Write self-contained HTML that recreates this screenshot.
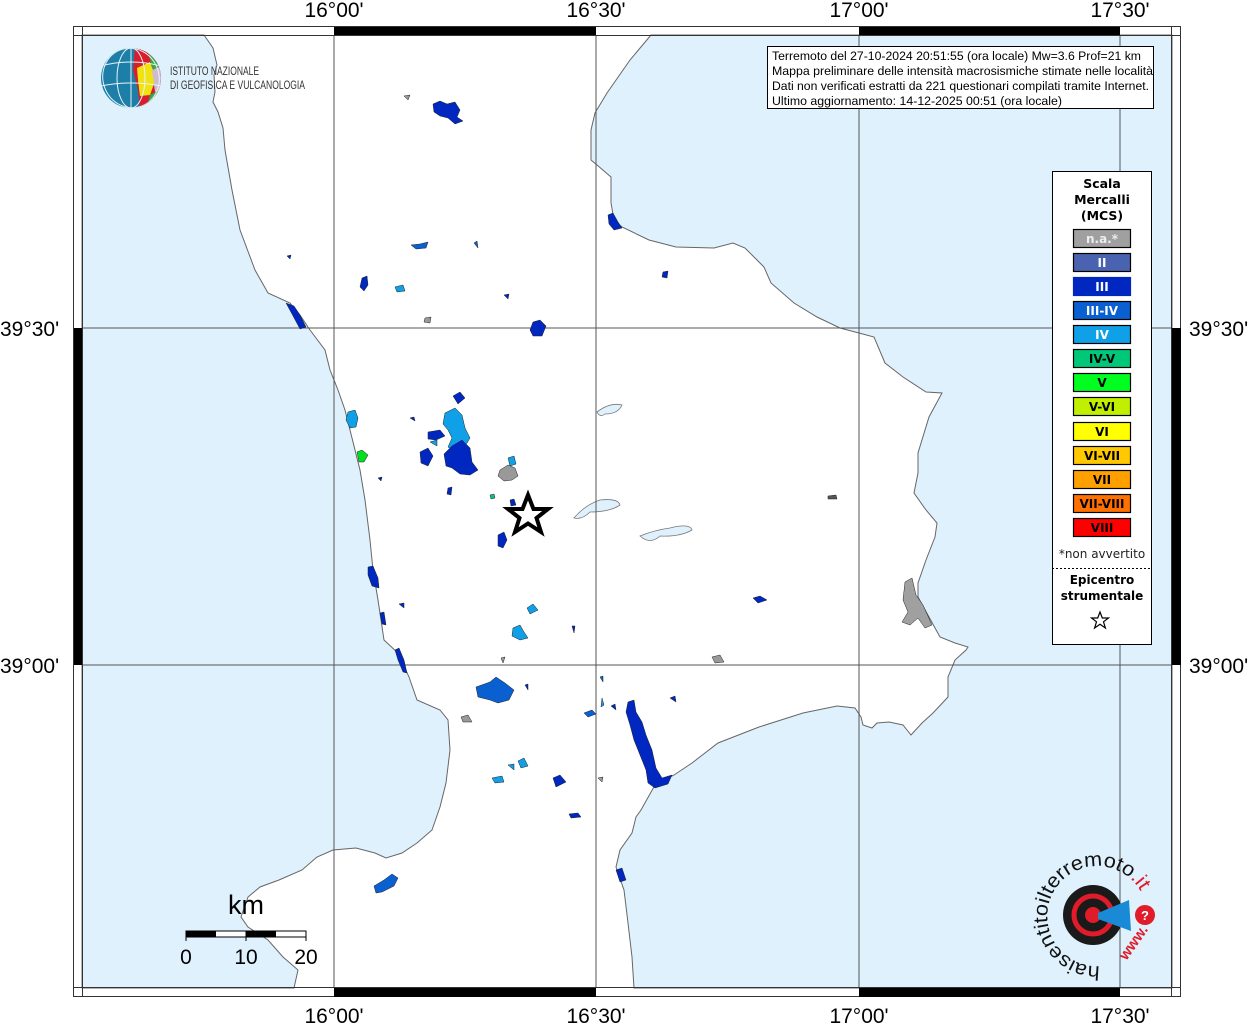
<!DOCTYPE html>
<html><head><meta charset="utf-8"><style>
html,body{margin:0;padding:0;background:#fff;width:1254px;height:1024px;overflow:hidden}
svg{display:block}
text{font-family:"Liberation Sans",sans-serif}
.dejav{font-family:"DejaVu Sans","Liberation Sans",sans-serif}
</style></head><body>
<svg width="1254" height="1024" viewBox="0 0 1254 1024" xmlns="http://www.w3.org/2000/svg">
<rect x="82" y="35" width="1090" height="953" fill="#fff"/>
<path d="M82,35 L204,35 L213,48 L217,65 L214,75 L215,92 L213,102 L218,112 L223,128 L225,150 L232,190 L240,230 L255,270 L268,293 L290,303 L300,315 L310,330 L325,350 L330,370 L338,390 L345,410 L350,430 L355,450 L360,470 L365,500 L370,540 L373,570 L378,600 L384,640 L398,653 L409,677 L417,700 L440,710 L448,720 L450,750 L446,783 L440,807 L432,830 L417,843 L402,853 L386,858 L375,853 L356,848 L333,850 L317,857 L302,870 L279,880 L260,887 L248,897 L241,917 L248,927 L268,940 L283,957 L298,970 L294,988 L82,988 Z" fill="#dff1fd" stroke="#666" stroke-width="1"/>
<path d="M651,35 L630,60 L607,93 L595,113 L591,130 L591,160 L597,165 L611,177 L611,203 L614,220 L622,227 L649,240 L676,247 L714,248 L733,243 L745,248 L764,267 L771,283 L794,303 L817,317 L840,328 L859,333 L874,337 L885,363 L903,377 L926,392 L942,393 L929,417 L918,453 L918,473 L914,493 L926,510 L937,523 L935,537 L926,560 L918,583 L918,597 L929,617 L940,637 L955,643 L968,647 L966,650 L955,660 L948,677 L948,697 L933,713 L922,723 L911,735 L907,730 L903,725 L889,722 L877,723 L872,728 L863,725 L861,717 L855,708 L837,706 L803,713 L759,727 L718,743 L692,763 L674,775 L655,785 L641,810 L636,817 L632,833 L620,850 L616,867 L624,890 L628,923 L632,957 L634,988 L1172,988 L1172,35 Z" fill="#dff1fd" stroke="#666" stroke-width="1"/>
<path d="M597,412 Q610,402 622,405 Q618,414 605,414 Q600,418 597,412Z" fill="#dff1fd" stroke="#777" stroke-width="0.8"/>
<path d="M574,518 Q585,505 600,500 Q618,498 620,505 Q610,512 590,512 Q582,520 574,518Z" fill="#dff1fd" stroke="#777" stroke-width="0.8"/>
<path d="M640,536 Q655,530 670,528 Q690,523 692,530 Q680,537 660,536 Q650,545 640,536Z" fill="#dff1fd" stroke="#777" stroke-width="0.8"/>
<g stroke="#555" stroke-width="1">
<line x1="334" y1="35" x2="334" y2="988"/><line x1="596" y1="35" x2="596" y2="988"/>
<line x1="859" y1="35" x2="859" y2="988"/><line x1="1120" y1="35" x2="1120" y2="988"/>
<line x1="82" y1="328" x2="1172" y2="328"/><line x1="82" y1="665" x2="1172" y2="665"/>
</g>
<g stroke="#222" stroke-width="0.5">
<path d="M433,104 L440,101 L447,104 L455,102 L460,110 L457,117 L463,121 L455,124 L448,118 L440,116 L434,112Z" fill="#0028c0"/>
<path d="M404,96 L410,95 L408,100Z" fill="#999"/>
<path d="M608,215 L613,213 L618,222 L622,228 L614,230 L609,224Z" fill="#0028c0"/>
<path d="M663,272 L668,271 L667,278 L662,277Z" fill="#0028c0"/>
<path d="M411,245 L420,244 L428,242 L426,248 L416,249Z" fill="#0a60d0"/>
<path d="M474,243 L477,241 L478,248Z" fill="#0a60d0"/>
<path d="M287,256 L291,255 L290,259Z" fill="#0028c0"/>
<path d="M362,278 L367,276 L368,285 L364,291 L360,287Z" fill="#0028c0"/>
<path d="M395,287 L403,285 L405,291 L397,292Z" fill="#10a0e8"/>
<path d="M504,295 L509,294 L508,299Z" fill="#0028c0"/>
<path d="M286,303 L294,306 L300,315 L306,327 L300,329 L292,314Z" fill="#0028c0"/>
<path d="M425,318 L431,317 L430,323 L424,322Z" fill="#999"/>
<path d="M533,322 L540,320 L546,326 L542,336 L533,336 L530,330Z" fill="#0028c0"/>
<path d="M348,412 L355,410 L358,418 L356,427 L350,428 L346,420Z" fill="#10a0e8"/>
<path d="M357,452 L362,450 L368,455 L364,462 L359,462Z" fill="#00e020"/>
<path d="M410,418 L414,417 L415,421Z" fill="#0028c0"/>
<path d="M445,413 L455,408 L462,415 L465,428 L470,438 L464,448 L456,452 L448,447 L452,438 L448,430 L443,424Z" fill="#10a0e8"/>
<path d="M453,396 L460,392 L465,398 L458,404Z" fill="#0028c0"/>
<path d="M428,432 L440,430 L445,436 L436,440 L428,439Z" fill="#0028c0"/>
<path d="M420,452 L428,448 L433,456 L428,466 L421,463Z" fill="#0028c0"/>
<path d="M444,454 L452,446 L462,440 L470,448 L472,462 L478,470 L470,475 L460,474 L452,468 L446,466Z" fill="#0028c0"/>
<path d="M430,442 L437,440 L437,446Z" fill="#10a0e8"/>
<path d="M500,470 L508,465 L515,468 L518,476 L512,480 L504,481 L498,476Z" fill="#999"/>
<path d="M508,458 L514,456 L516,464 L510,466Z" fill="#10a0e8"/>
<path d="M448,488 L452,487 L451,495 L447,494Z" fill="#0028c0"/>
<path d="M490,495 L494,494 L495,498 L491,499Z" fill="#00c878"/>
<path d="M378,478 L382,477 L381,481Z" fill="#0028c0"/>
<path d="M510,500 L514,499 L516,505 L511,506Z" fill="#0028c0"/>
<path d="M498,535 L504,532 L507,540 L503,548 L498,546Z" fill="#0028c0"/>
<path d="M368,567 L373,566 L378,578 L379,588 L372,586 L368,575Z" fill="#0028c0"/>
<path d="M828,496 L836,495 L837,499 L828,499Z" fill="#555"/>
<path d="M753,598 L760,596 L767,600 L758,603Z" fill="#0028c0"/>
<path d="M527,608 L533,604 L538,610 L530,614Z" fill="#10a0e8"/>
<path d="M513,628 L520,625 L524,632 L528,638 L520,640 L512,636Z" fill="#10a0e8"/>
<path d="M399,604 L404,603 L404,608Z" fill="#0028c0"/>
<path d="M572,626 L575,626 L574,633Z" fill="#0028c0"/>
<path d="M380,613 L384,612 L386,625 L382,624Z" fill="#0028c0"/>
<path d="M905,582 L912,578 L916,595 L923,605 L932,625 L925,628 L918,618 L910,625 L902,622 L908,612 L903,600Z" fill="#a0a0a0"/>
<path d="M712,657 L720,655 L724,662 L715,663Z" fill="#999"/>
<path d="M501,658 L505,657 L503,663Z" fill="#999"/>
<path d="M395,650 L399,648 L404,660 L407,673 L403,672 L398,660Z" fill="#0028c0"/>
<path d="M476,687 L490,682 L496,677 L505,683 L514,690 L509,700 L498,703 L490,700 L478,697Z" fill="#0a60d0"/>
<path d="M461,717 L468,715 L472,722 L463,722Z" fill="#999"/>
<path d="M525,685 L528,684 L528,690Z" fill="#0028c0"/>
<path d="M600,677 L603,676 L603,682Z" fill="#0a60d0"/>
<path d="M602,698 L604,705 L601,707Z" fill="#10a0e8"/>
<path d="M584,713 L592,710 L596,714 L588,717Z" fill="#0a60d0"/>
<path d="M611,706 L615,704 L616,710Z" fill="#0028c0"/>
<path d="M628,702 L634,700 L636,712 L642,722 L646,735 L652,750 L656,768 L662,778 L672,775 L668,784 L655,788 L648,783 L646,770 L640,755 L634,740 L630,725 L626,712Z" fill="#0028c0"/>
<path d="M670,698 L675,696 L676,702Z" fill="#0028c0"/>
<path d="M518,761 L524,758 L528,766 L521,768Z" fill="#10a0e8"/>
<path d="M508,765 L514,764 L514,770Z" fill="#10a0e8"/>
<path d="M492,778 L502,776 L504,782 L495,783Z" fill="#10a0e8"/>
<path d="M553,778 L560,775 L566,782 L556,787Z" fill="#0028c0"/>
<path d="M598,778 L603,777 L602,782Z" fill="#999"/>
<path d="M569,814 L578,813 L581,817 L571,818Z" fill="#0028c0"/>
<path d="M616,870 L622,868 L626,880 L620,882Z" fill="#0028c0"/>
<path d="M374,886 L384,880 L392,874 L398,878 L394,886 L382,892 L376,893Z" fill="#0a60d0"/>
</g>
<path d="M528,495 L533.5,509 L548,509 L536.5,518 L541,532 L528,523.5 L515,532 L519.5,518 L508,509 L522.5,509Z" fill="#fff" stroke="#000" stroke-width="4" stroke-linejoin="miter"/>
<rect x="73.5" y="26.5" width="1107" height="970" fill="none" stroke="#333" stroke-width="1"/>
<rect x="82.5" y="35.5" width="1089" height="952" fill="none" stroke="#333" stroke-width="1"/>
<g fill="#000">
<rect x="334" y="27" width="262" height="8"/><rect x="859" y="27" width="261" height="8"/>
<rect x="334" y="988" width="262" height="9"/><rect x="859" y="988" width="261" height="9"/>
<rect x="74" y="328" width="8" height="337"/><rect x="1172" y="328" width="9" height="337"/>
</g>
<g stroke="#333" stroke-width="1">
<line x1="82.5" y1="26" x2="82.5" y2="35"/><line x1="1171.5" y1="26" x2="1171.5" y2="35"/>
<line x1="82.5" y1="988" x2="82.5" y2="997"/><line x1="1171.5" y1="988" x2="1171.5" y2="997"/>
<line x1="73" y1="35.5" x2="82" y2="35.5"/><line x1="1172" y1="35.5" x2="1181" y2="35.5"/>
<line x1="73" y1="987.5" x2="82" y2="987.5"/><line x1="1172" y1="987.5" x2="1181" y2="987.5"/>
</g>
<g font-size="21" fill="#000" text-anchor="middle">
<text x="334" y="17">16°00'</text><text x="596" y="17">16°30'</text><text x="859" y="17">17°00'</text><text x="1120" y="17">17°30'</text>
<text x="334" y="1023">16°00'</text><text x="596" y="1023">16°30'</text><text x="859" y="1023">17°00'</text><text x="1120" y="1023">17°30'</text>
</g>
<g font-size="21" fill="#000">
<text x="0" y="336">39°30'</text><text x="0" y="673">39°00'</text>
<text x="1189" y="336">39°30'</text><text x="1189" y="673">39°00'</text>
</g>
<rect x="767.5" y="46.5" width="386" height="62" fill="#fff" stroke="#000" stroke-width="1"/>
<g font-size="12.4" fill="#000">
<text x="772" y="60" textLength="369" lengthAdjust="spacingAndGlyphs">Terremoto del 27-10-2024 20:51:55 (ora locale) Mw=3.6 Prof=21 km</text>
<text x="772" y="75" textLength="381" lengthAdjust="spacingAndGlyphs">Mappa preliminare delle intensità macrosismiche stimate nelle località</text>
<text x="772" y="90" textLength="377" lengthAdjust="spacingAndGlyphs">Dati non verificati estratti da 221 questionari compilati tramite Internet.</text>
<text x="772" y="105" textLength="290" lengthAdjust="spacingAndGlyphs">Ultimo aggiornamento: 14-12-2025 00:51 (ora locale)</text>
</g>
<rect x="1052.5" y="171.5" width="99" height="473" fill="#fff" stroke="#000" stroke-width="1"/>
<g font-size="12.5" font-weight="bold" text-anchor="middle" fill="#000">
<text x="1102" y="188" class="dejav">Scala</text><text x="1102" y="204" class="dejav">Mercalli</text><text x="1102" y="220" class="dejav">(MCS)</text>
</g>
<g stroke="#000" stroke-width="1.2">
<rect x="1073.5" y="229.5" width="57" height="18" fill="#a0a0a0"/>
<rect x="1073.5" y="253.5" width="57" height="18" fill="#4a63b0"/>
<rect x="1073.5" y="277.5" width="57" height="18" fill="#0028c0" stroke="#0028c0"/>
<rect x="1073.5" y="301.5" width="57" height="18" fill="#0a60d0"/>
<rect x="1073.5" y="325.5" width="57" height="18" fill="#10a0e8"/>
<rect x="1073.5" y="349.5" width="57" height="18" fill="#00c878"/>
<rect x="1073.5" y="373.5" width="57" height="18" fill="#00ff20"/>
<rect x="1073.5" y="397.5" width="57" height="18" fill="#c0f000"/>
<rect x="1073.5" y="422.5" width="57" height="18" fill="#ffff00"/>
<rect x="1073.5" y="446.5" width="57" height="18" fill="#ffc800"/>
<rect x="1073.5" y="470.5" width="57" height="18" fill="#ffa000"/>
<rect x="1073.5" y="494.5" width="57" height="18" fill="#ff7000"/>
<rect x="1073.5" y="518.5" width="57" height="18" fill="#ff0000"/>
</g>
<g font-size="12" font-weight="bold" text-anchor="middle">
<text x="1102" y="243" fill="#eee" class="dejav">n.a.*</text>
<text x="1102" y="267" fill="#fff" class="dejav">II</text>
<text x="1102" y="291" fill="#fff" class="dejav">III</text>
<text x="1102" y="315" fill="#fff" class="dejav">III-IV</text>
<text x="1102" y="339" fill="#fff" class="dejav">IV</text>
<text x="1102" y="363" fill="#000" class="dejav">IV-V</text>
<text x="1102" y="387" fill="#000" class="dejav">V</text>
<text x="1102" y="411" fill="#000" class="dejav">V-VI</text>
<text x="1102" y="436" fill="#000" class="dejav">VI</text>
<text x="1102" y="460" fill="#000" class="dejav">VI-VII</text>
<text x="1102" y="484" fill="#000" class="dejav">VII</text>
<text x="1102" y="508" fill="#000" class="dejav">VII-VIII</text>
<text x="1102" y="532" fill="#000" class="dejav">VIII</text>
</g>
<text x="1102" y="558" font-size="12" text-anchor="middle" fill="#222" class="dejav">*non avvertito</text>
<line x1="1052" y1="568.5" x2="1151" y2="568.5" stroke="#000" stroke-dasharray="2,2"/>
<text x="1102" y="584" font-size="12" font-weight="bold" text-anchor="middle" class="dejav">Epicentro</text>
<text x="1102" y="600" font-size="12" font-weight="bold" text-anchor="middle" class="dejav">strumentale</text>
<path d="M1100,612 L1102.3,618 L1108.5,618 L1103.5,621.8 L1105.4,628 L1100,624.2 L1094.6,628 L1096.5,621.8 L1091.5,618 L1097.7,618Z" fill="#fff" stroke="#000" stroke-width="1.2"/>
<text x="246" y="914" font-size="27" text-anchor="middle">km</text>
<rect x="186" y="931" width="120" height="6" fill="#fff" stroke="#000" stroke-width="1"/>
<rect x="186" y="931" width="30" height="6" fill="#000"/><rect x="246" y="931" width="30" height="6" fill="#000"/>
<line x1="186" y1="931" x2="186" y2="941" stroke="#000"/><line x1="246" y1="931" x2="246" y2="941" stroke="#000"/><line x1="306" y1="931" x2="306" y2="941" stroke="#000"/>
<g font-size="21" text-anchor="middle"><text x="186" y="964">0</text><text x="246" y="964">10</text><text x="306" y="964">20</text></g>
<defs><clipPath id="gc"><circle cx="131" cy="78" r="30"/></clipPath></defs>
<g clip-path="url(#gc)">
<rect x="100" y="47" width="62" height="62" fill="#1d7ea8"/>
<path d="M135,48 L162,55 L162,110 L140,110 L138,90 L133,70Z" fill="#d81e2c"/>
<path d="M137,68 L150,62 L156,78 L150,95 L140,96 L138,80Z" fill="#f1e312"/>
<path d="M148,50 L162,60 L162,75 L152,68Z" fill="#3aa54a"/>
<path d="M150,95 L162,88 L162,110 L146,110Z" fill="#3aa54a"/>
<path d="M152,70 L162,66 L162,90 L155,92Z" fill="#cdbcd0"/>
<g fill="none" stroke="#e8f4f8" stroke-width="1">
<ellipse cx="131" cy="78" rx="14" ry="30"/><ellipse cx="131" cy="78" rx="28" ry="30" transform="rotate(-20 131 78)"/>
<path d="M101,66 Q131,58 161,66"/><path d="M101,86 Q131,80 161,86"/><line x1="131" y1="48" x2="131" y2="108"/></g>
</g>
<g font-size="12" fill="#333">
<text x="170" y="75" textLength="89" lengthAdjust="spacingAndGlyphs">ISTITUTO NAZIONALE</text>
<text x="170" y="89" textLength="135" lengthAdjust="spacingAndGlyphs">DI GEOFISICA E VULCANOLOGIA</text>
</g>
<circle cx="1093" cy="915" r="30" fill="#1a1a1a"/>
<circle cx="1093" cy="915" r="19" fill="none" stroke="#e01b2a" stroke-width="5"/>
<circle cx="1093" cy="915" r="8" fill="#e01b2a"/>
<path d="M1098,913 L1129,900 L1131,931 L1098,919Z" fill="#1b8ad6"/>
<circle cx="1145" cy="915" r="10" fill="#e01b2a"/>
<text x="1145" y="920" font-size="13" font-weight="bold" fill="#fff" text-anchor="middle">?</text>
<defs><path id="arc" d="M1100,966 A50,50 0 1,1 1146,905"/></defs>
<text font-size="20" fill="#111"><textPath href="#arc" textLength="212" lengthAdjust="spacingAndGlyphs">haisentitoilterremoto<tspan fill="#e01b2a">.it</tspan></textPath></text>
<text x="1118" y="955" font-size="15" font-weight="bold" fill="#e01b2a" transform="rotate(-55 1128 950)">www.</text>
</svg>
</body></html>
